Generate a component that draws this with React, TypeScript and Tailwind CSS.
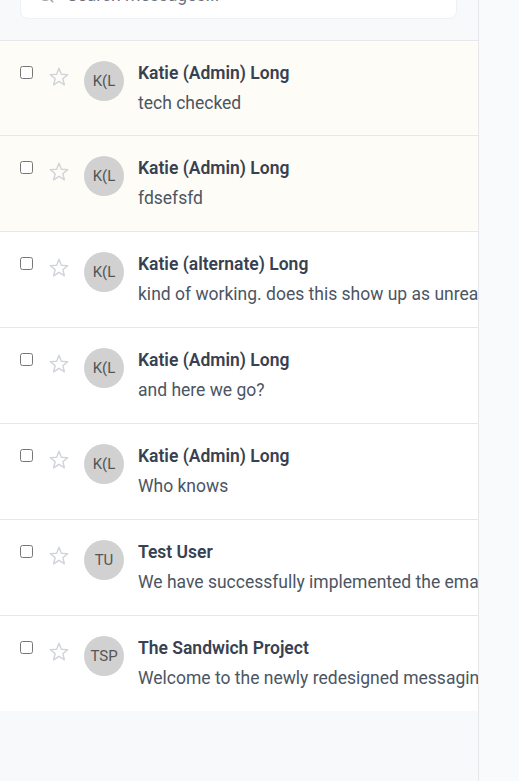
import React from "react";

type Msg = { initials: string; name: string; text: string; unread?: boolean };

const messages: Msg[] = [
  { initials: "K(L", name: "Katie (Admin) Long", text: "tech checked", unread: true },
  { initials: "K(L", name: "Katie (Admin) Long", text: "fdsefsfd", unread: true },
  {
    initials: "K(L",
    name: "Katie (alternate) Long",
    text: "kind of working. does this show up as unread for you?",
  },
  { initials: "K(L", name: "Katie (Admin) Long", text: "and here we go?" },
  { initials: "K(L", name: "Katie (Admin) Long", text: "Who knows" },
  {
    initials: "TU",
    name: "Test User",
    text: "We have successfully implemented the email notification system for all users.",
  },
  {
    initials: "TSP",
    name: "The Sandwich Project",
    text: "Welcome to the newly redesigned messaging system!",
  },
];

function StarIcon() {
  return (
    <svg
      width="22"
      height="22"
      viewBox="0 0 24 24"
      fill="none"
      stroke="#d1d5db"
      strokeWidth="1.6"
      strokeLinejoin="round"
      className="shrink-0 mt-[5px] ml-[15px]"
    >
      <polygon points="12,2.5 14.59,8.94 21.51,9.41 16.18,13.86 17.88,20.59 12,16.9 6.12,20.59 7.82,13.86 2.49,9.41 9.41,8.94" />
    </svg>
  );
}

function SearchIcon() {
  return (
    <svg
      width="18"
      height="18"
      viewBox="0 0 24 24"
      fill="none"
      stroke="#9ca3af"
      strokeWidth="2"
      strokeLinecap="round"
      strokeLinejoin="round"
      className="shrink-0"
    >
      <circle cx="11" cy="11" r="8" />
      <path d="m21 21-4.3-4.3" />
    </svg>
  );
}

function Row({ m }: { m: Msg }) {
  return (
    <div
      className={
        "flex items-start pl-5 pt-5 pb-[21px] first:pb-[20px] border-b border-[#e5e7eb] last:border-b-0 " +
        (m.unread ? "bg-[#fefcf6]" : "bg-white")
      }
    >
      <input type="checkbox" className="shrink-0 mt-[5px] w-[13px] h-[13px]" />
      <StarIcon />
      <div className="shrink-0 ml-[14px] w-10 h-10 rounded-full bg-[#d1d1d1] flex items-center justify-center text-[15px] text-[#555555]">
        {m.initials}
      </div>
      <div className="ml-[14px] min-w-0 flex-1 overflow-hidden">
        <div className="text-[17.5px] leading-6 font-semibold text-[#374151] whitespace-nowrap">
          {m.name}
        </div>
        <div className="mt-[6px] text-[17.5px] leading-6 text-[#4b5563] whitespace-nowrap">
          {m.text}
        </div>
      </div>
    </div>
  );
}

export default function App() {
  return (
    <div
      className="flex h-screen w-full overflow-hidden bg-[#f9fafb]"
      style={{ fontFamily: "Roboto, 'Liberation Sans', sans-serif" }}
    >
      <div className="flex flex-col w-[479px] shrink-0 -mt-[49px] h-[830px] bg-[#f8f9fb] border-r border-[#e5e7eb] overflow-hidden">
        <div className="pt-5 pb-[21px] pl-5 pr-[21px] border-b border-[#e5e7eb]">
          <div className="h-12 bg-white rounded-lg border border-[#f0f1f4] flex items-center pl-4">
            <SearchIcon />
            <span className="ml-3 text-[17.5px] leading-6 text-[#6b7280]">Search messages...</span>
          </div>
        </div>
        <div className="flex flex-col">
          {messages.map((m, i) => (
            <Row key={i} m={m} />
          ))}
        </div>
      </div>
      <div className="flex-1 bg-[#f9fafb]" />
    </div>
  );
}
